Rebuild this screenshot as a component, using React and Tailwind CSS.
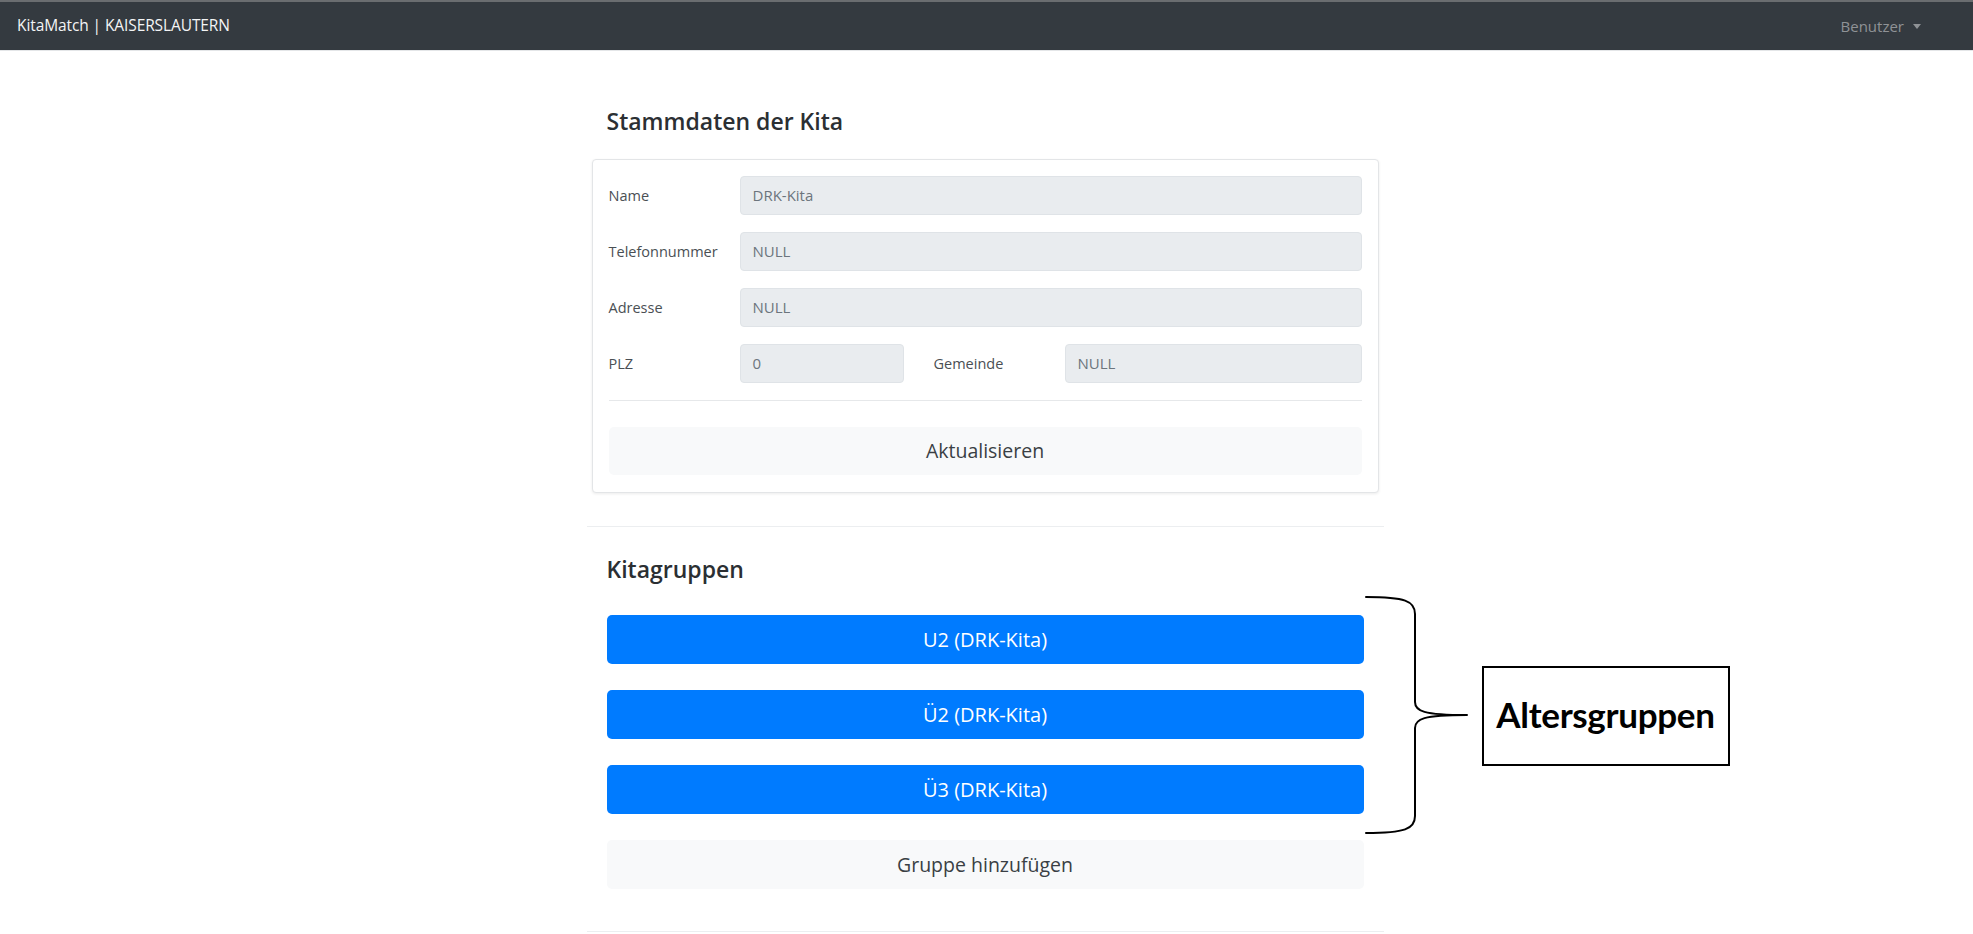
import React from 'react';

const fields = [
  { label: 'Name', value: 'DRK-Kita' },
  { label: 'Telefonnummer', value: 'NULL' },
  { label: 'Adresse', value: 'NULL' },
];

const groups = ['U2 (DRK-Kita)', 'Ü2 (DRK-Kita)', 'Ü3 (DRK-Kita)'];

function ReadonlyInput({ value, className = '' }) {
  return (
    <div
      className={`h-[39px] flex items-center rounded-[4px] border border-[#dfe3e7] bg-[#e9ecef] px-[12px] text-[15px] text-[#6c757d] ${className}`}
    >
      {value}
    </div>
  );
}

function Brace() {
  return (
    <svg width="112" height="248" viewBox="0 0 112 248" fill="none" className="block">
      <path
        d="M5 5 C44 5 54 9 54 22 L54 110 C54 119 62 123 106 123 M106 123 C62 123 54 127 54 136 L54 224 C54 237 44 241 5 241"
        stroke="#000"
        strokeWidth="2"
        strokeLinecap="round"
        strokeLinejoin="round"
      />
    </svg>
  );
}

export default function App() {
  return (
    <div className="min-h-screen bg-white font-['Open_Sans',sans-serif] text-[#212529]">
      {/* Navbar */}
      <nav className="h-[51px] bg-[#343a40] border-t-2 border-[#6a6d70] border-b border-b-[#e4e6e8] flex items-center justify-between pl-[17px] pr-[52px]">
        <span className="text-[15.5px] text-[#f3f4f5] tracking-[-0.1px]">KitaMatch | KAISERSLAUTERN</span>
        <button className="flex items-center gap-[9px] text-[15px] text-[#8f9296]">
          Benutzer
          <span className="w-0 h-0 border-l-[4.5px] border-r-[4.5px] border-t-[5px] border-l-transparent border-r-transparent border-t-[#8f9296]" />
        </button>
      </nav>

      <div className="flex justify-center pr-[3px]">
        <div className="w-[797px]">
          {/* Stammdaten */}
          <h4 className="mt-[56px] px-5 text-[23px] leading-[28px] font-semibold text-[#2b2f33]">Stammdaten der Kita</h4>

          <div className="mx-[5px] mt-[24px] rounded-[4px] border border-[#e3e5e7] bg-white shadow-[0_1px_3px_rgba(0,0,0,0.08)] px-[16px] pt-[16px] pb-[17px]">
            <div className="flex flex-col gap-[17px]">
              {fields.map((f) => (
                <div key={f.label} className="flex items-center">
                  <label className="w-[131px] text-[14.5px] text-[#4a4f54]">{f.label}</label>
                  <ReadonlyInput value={f.value} className="flex-1" />
                </div>
              ))}
              <div className="flex items-center">
                <label className="w-[131px] text-[14.5px] text-[#4a4f54]">PLZ</label>
                <ReadonlyInput value="0" className="w-[164px]" />
                <label className="ml-[30px] w-[131px] text-[14.5px] text-[#4a4f54]">Gemeinde</label>
                <ReadonlyInput value="NULL" className="flex-1" />
              </div>
            </div>
            <div className="mt-[17px] h-px bg-[#e6e8ea]" />
            <button className="mt-[26px] w-full h-[48px] rounded-[5px] bg-[#f8f9fa] text-[19.5px] text-[#3a3f44]">
              Aktualisieren
            </button>
          </div>

          <div className="mt-[33px] h-px bg-[#eceef0]" />

          {/* Kitagruppen */}
          <h4 className="mt-[28px] px-5 text-[23px] leading-[28px] font-semibold text-[#2b2f33]">Kitagruppen</h4>

          <div className="relative mt-[32px] mx-5 flex flex-col gap-[26px]">
            {groups.map((g) => (
              <button key={g} className="h-[49px] w-full rounded-[5px] bg-[#007bff] text-[20px] text-white">
                {g}
              </button>
            ))}
            <button className="h-[49px] w-full rounded-[5px] bg-[#f8f9fa] text-[19.5px] text-[#3a3f44]">
              Gruppe hinzufügen
            </button>

            {/* Annotation */}
            <div className="absolute left-[754px] top-[-23px]">
              <Brace />
            </div>
            <div className="absolute left-[875px] top-[51px] w-[248px] h-[100px] border-2 border-black flex items-center justify-center">
              <span className="font-['Lato',sans-serif] font-bold text-[35px] tracking-[-0.3px] text-black leading-none pb-[4px]">Altersgruppen</span>
            </div>
          </div>

          <div className="mt-[42px] h-px bg-[#eceef0]" />
        </div>
      </div>
    </div>
  );
}
